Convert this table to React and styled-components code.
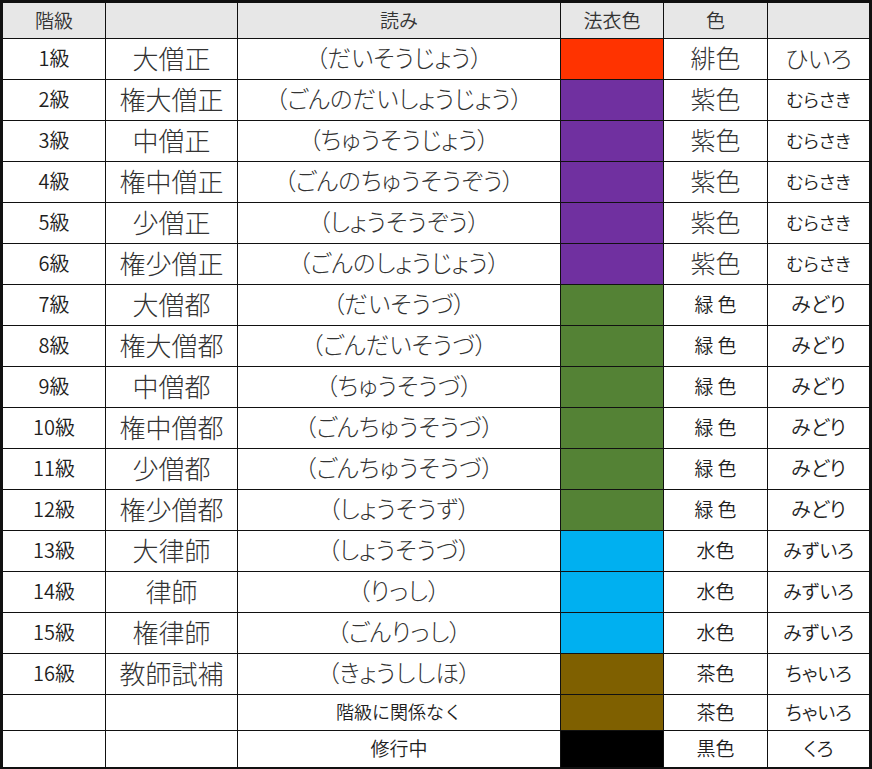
import React from 'react';
import styled, { createGlobalStyle } from 'styled-components';

const GlobalStyle = createGlobalStyle`
  html, body {
    margin: 0;
    padding: 0;
    background: #ffffff;
  }
  body {
    font-family: "Noto Sans CJK JP", "Noto Sans", sans-serif;
    color: #222;
  }
`;

const Table = styled.div`
  box-sizing: border-box;
  width: 872px;
  display: grid;
  grid-template-columns: 103px 132px 323px 103px 104px 101px;
  border: 3px solid #111;
  border-bottom-width: 2px;
`;

// large text renders thin (like the original's Meiryo), small text a touch heavier
const Cell = styled.div`
  box-sizing: border-box;
  height: ${({ $h }) => $h}px;
  display: flex;
  align-items: center;
  justify-content: center;
  border-right: ${({ $last }) => ($last ? 'none' : '1px solid #111')};
  border-bottom: ${({ $bottom }) => ($bottom ? 'none' : '1px solid #111')};
  background: ${({ $bg }) => $bg || '#ffffff'};
  color: ${({ $size }) => ($size > 21 ? '#333' : '#1e1e1e')};
  font-size: ${({ $size }) => $size || 19}px;
  font-weight: ${({ $size }) => ($size > 21 ? 300 : 350)};
  line-height: 1;
  white-space: pre;
  font-feature-settings: ${({ $palt }) => ($palt ? '"palt"' : 'normal')};
  padding-bottom: 3px;
`;

const HeadCell = styled(Cell)`
  background: #e7e7e7;
  color: #333;
`;

const RED = '#ff3300';
const PURPLE = '#7030a0';
const GREEN = '#548235';
const BLUE = '#00b0f0';
const BROWN = '#7f6000';

const rows = [
  ['1級', '大僧正', '（だいそうじょう）', RED, '緋色', 25, 'ひいろ', 24],
  ['2級', '権大僧正', '（ごんのだいしょうじょう）', PURPLE, '紫色', 25, 'むらさき', 18],
  ['3級', '中僧正', '（ちゅうそうじょう）', PURPLE, '紫色', 25, 'むらさき', 18],
  ['4級', '権中僧正', '（ごんのちゅうそうぞう）', PURPLE, '紫色', 25, 'むらさき', 18],
  ['5級', '少僧正', '（しょうそうぞう）', PURPLE, '紫色', 25, 'むらさき', 18],
  ['6級', '権少僧正', '（ごんのしょうじょう）', PURPLE, '紫色', 25, 'むらさき', 18],
  ['7級', '大僧都', '（だいそうづ）', GREEN, '緑 色', 19, 'みどり', 20],
  ['8級', '権大僧都', '（ごんだいそうづ）', GREEN, '緑 色', 19, 'みどり', 20],
  ['9級', '中僧都', '（ちゅうそうづ）', GREEN, '緑 色', 19, 'みどり', 20],
  ['10級', '権中僧都', '（ごんちゅうそうづ）', GREEN, '緑 色', 19, 'みどり', 20],
  ['11級', '少僧都', '（ごんちゅうそうづ）', GREEN, '緑 色', 19, 'みどり', 20],
  ['12級', '権少僧都', '（しょうそうず）', GREEN, '緑 色', 19, 'みどり', 20],
  ['13級', '大律師', '（しょうそうづ）', BLUE, '水色', 19, 'みずいろ', 19],
  ['14級', '律師', '（りっし）', BLUE, '水色', 19, 'みずいろ', 19],
  ['15級', '権律師', '（ごんりっし）', BLUE, '水色', 19, 'みずいろ', 19],
  ['16級', '教師試補', '（きょうししほ）', BROWN, '茶色', 19, 'ちゃいろ', 19],
];

const extra = [
  ['階級に関係なく', BROWN, '茶色', 'ちゃいろ', 18],
  ['修行中', '#000000', '黒色', 'くろ', 19],
];

const App = () => (
  <>
    <GlobalStyle />
    <Table>
      <HeadCell $h={36} $size={19}>階級</HeadCell>
      <HeadCell $h={36} />
      <HeadCell $h={36} $size={19}>読み</HeadCell>
      <HeadCell $h={36} $size={19}>法衣色</HeadCell>
      <HeadCell $h={36} $size={19}>色</HeadCell>
      <HeadCell $h={36} $last />

      {rows.map(([rank, name, reading, bg, colorName, cs, kana, ks]) => (
        <React.Fragment key={rank}>
          <Cell $h={41} $size={20}>{rank}</Cell>
          <Cell $h={41} $size={26}>{name}</Cell>
          <Cell $h={41} $size={23.5} $palt>{reading}</Cell>
          <Cell $h={41} $bg={bg} />
          <Cell $h={41} $size={cs}>{colorName}</Cell>
          <Cell $h={41} $size={ks} $palt $last>{kana}</Cell>
        </React.Fragment>
      ))}

      {extra.map(([note, bg, colorName, kana, size], i) => {
        const bottom = i === extra.length - 1;
        return (
          <React.Fragment key={note}>
            <Cell $h={36} $bottom={bottom} />
            <Cell $h={36} $bottom={bottom} />
            <Cell $h={36} $size={size} $bottom={bottom}>{note}</Cell>
            <Cell $h={36} $bg={bg} $bottom={bottom} />
            <Cell $h={36} $size={19} $bottom={bottom}>{colorName}</Cell>
            <Cell $h={36} $size={19} $palt $last $bottom={bottom}>{kana}</Cell>
          </React.Fragment>
        );
      })}
    </Table>
  </>
);

export default App;
